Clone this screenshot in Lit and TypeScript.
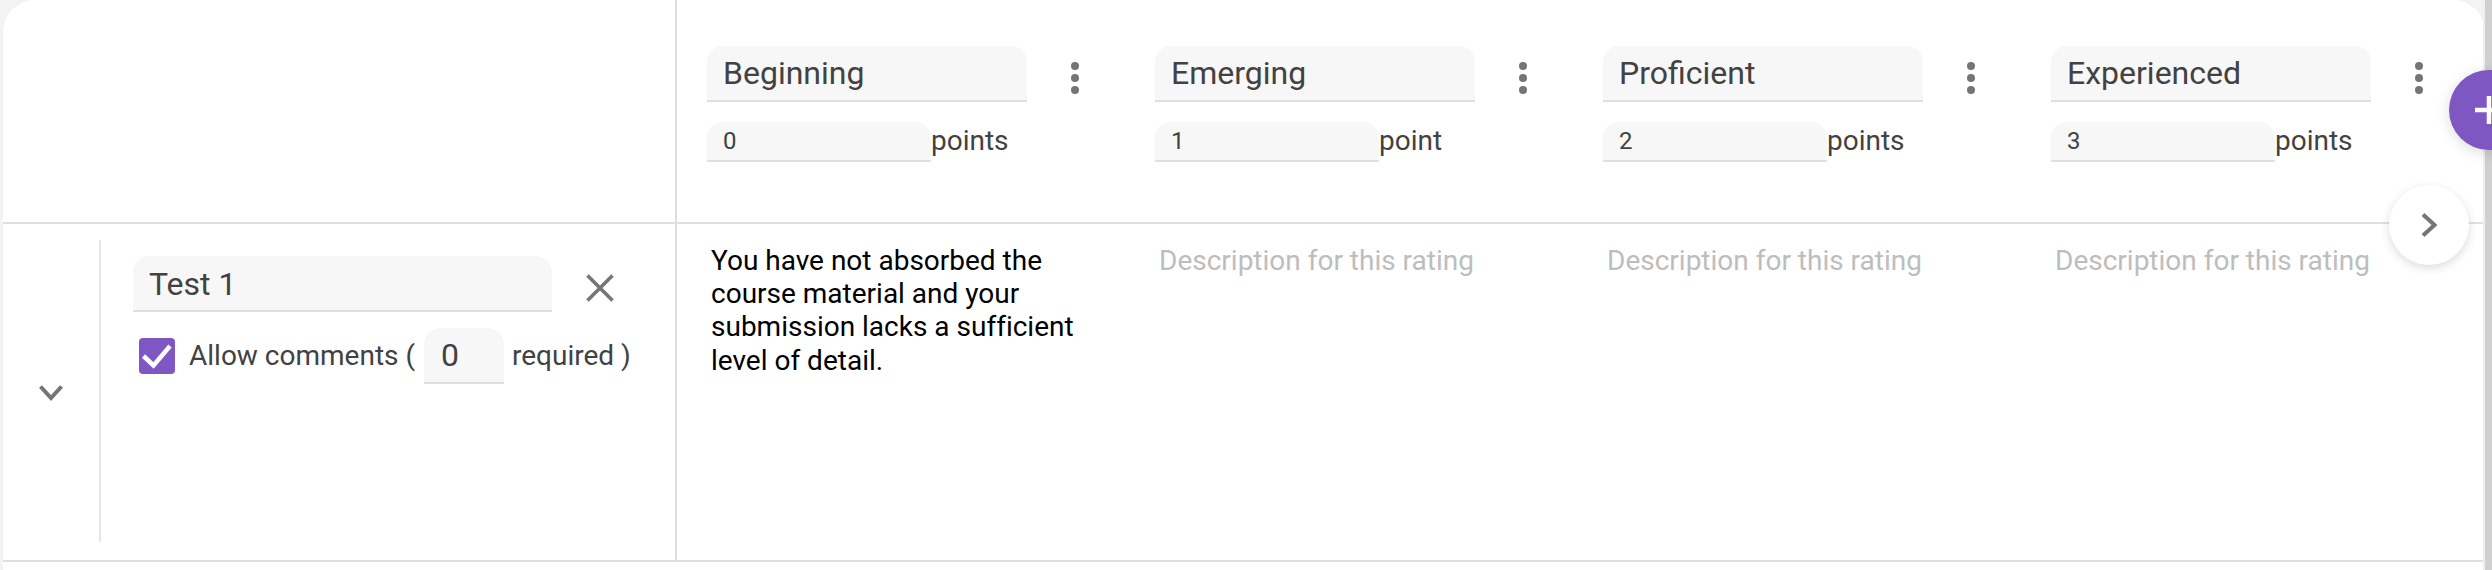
import { LitElement, html, css } from "lit";
import { customElement } from "lit/decorators.js";

const ratings = [
  { title: "Beginning", value: "0", unit: "points", desc: "You have not absorbed the course material and your submission lacks a sufficient level of detail.", filled: true },
  { title: "Emerging", value: "1", unit: "point", desc: "Description for this rating", filled: false },
  { title: "Proficient", value: "2", unit: "points", desc: "Description for this rating", filled: false },
  { title: "Experienced", value: "3", unit: "points", desc: "Description for this rating", filled: false },
];

@customElement("app-root")
export class AppRoot extends LitElement {
  static styles = css`
    :host {
      display: block;
      width: 2492px;
      height: 570px;
      overflow: hidden;
      position: relative;
      background: #f3f3f3;
      font-family: Roboto, "Liberation Sans", sans-serif;
      color: #424242;
    }
    .card {
      margin-left: 3px;
      width: 2482px;
      height: 570px;
      background: #fff;
      border-top-left-radius: 32px;
      border-top-right-radius: 32px;
      overflow: hidden;
    }
    .head {
      display: flex;
      height: 222px;
      border-bottom: 2px solid #e0e0e0;
    }
    .row {
      display: flex;
      height: 336px;
      border-bottom: 2px solid #e0e0e0;
    }
    .left {
      flex: none;
      width: 672px;
      border-right: 2px solid #e0e0e0;
    }
    .row .left {
      display: flex;
      padding-top: 16px;
      padding-bottom: 18px;
      height: 302px;
    }
    .chev {
      flex: none;
      width: 98px;
      border-right: 2px solid #e7e7e7;
      display: flex;
      justify-content: center;
      padding-top: 145px;
      padding-right: 1px;
      box-sizing: border-box;
    }
    .crit { padding: 16px 0 0 32px; }
    .crit-top { display: flex; align-items: center; }
    .field {
      background: #f7f7f7;
      border-bottom: 2px solid #e0e0e0;
      border-radius: 16px 16px 0 0;
      box-sizing: border-box;
    }
    .name {
      width: 419px;
      height: 56px;
      padding-left: 16px;
      font-size: 32px;
      line-height: 56px;
    }
    .x { margin-left: 34px; display: block; margin-top: 7px; }
    .comments {
      display: flex;
      align-items: center;
      margin-top: 16px;
      margin-left: 6px;
      font-size: 28px;
    }
    .comments span { margin-bottom: 2px; }
    .check {
      flex: none;
      width: 36px;
      height: 36px;
      border-radius: 4px;
      background: #7e57c2;
      display: block;
      margin-right: 14px;
    }
    .req {
      width: 80px;
      height: 56px;
      margin: 0 8px 0 9px;
      padding-left: 17px;
      font-size: 32px;
      line-height: 54px;
    }
    .cols { display: flex; padding-left: 30px; }
    .col { flex: none; width: 448px; box-sizing: border-box; }
    .head .col { padding-top: 46px; }
    .title-row { display: flex; align-items: flex-start; }
    .title {
      width: 320px;
      height: 56px;
      padding-left: 16px;
      font-size: 32px;
      line-height: 55px;
    }
    .dots { display: block; margin-left: 44px; margin-top: 16px; }
    .pts { display: flex; margin-top: 20px; align-items: flex-start; }
    .val {
      width: 224px;
      height: 40px;
      padding-left: 16px;
      font-size: 24px;
      line-height: 38px;
    }
    .unit { font-size: 28px; line-height: 38px; }
    .desc {
      width: 364px;
      padding: 20px 0 0 4px;
      font-size: 28px;
      line-height: 33.2px;
      color: #000;
      font-variant-ligatures: none;
    }
    .desc.empty { color: #bdbdbd; white-space: nowrap; }
    .scroll {
      position: absolute;
      left: 2483px;
      top: 0;
      width: 9px;
      height: 570px;
      box-sizing: border-box;
      border-left: 2px solid #efefef;
      background: #d0d0d0;
    }
    .fab {
      position: absolute;
      left: 2449px;
      top: 70px;
      width: 80px;
      height: 80px;
      border-radius: 50%;
      background: #7e57c2;
      box-shadow: 0 3px 14px rgba(0,0,0,.14);
      display: block;
    }
    .next {
      position: absolute;
      left: 2389px;
      top: 185px;
      width: 80px;
      height: 80px;
      border-radius: 50%;
      background: #fff;
      box-shadow: 0 3px 10px rgba(0,0,0,.14);
      display: flex;
      align-items: center;
      justify-content: center;
    }
  `;

  private dots() {
    return html`<svg class="dots" width="8" height="32" viewBox="0 0 8 32" fill="#757575">
      <circle cx="4" cy="4" r="4"></circle><circle cx="4" cy="16" r="4"></circle><circle cx="4" cy="28" r="4"></circle>
    </svg>`;
  }

  render() {
    return html`
      <div class="card">
        <div class="head">
          <div class="left"></div>
          <div class="cols">
            ${ratings.map(
              (r) => html`<div class="col">
                <div class="title-row"><div class="field title">${r.title}</div>${this.dots()}</div>
                <div class="pts"><div class="field val">${r.value}</div><div class="unit">${r.unit}</div></div>
              </div>`
            )}
          </div>
        </div>
        <div class="row">
          <div class="left">
            <div class="chev">
              <svg width="24" height="16" viewBox="0 0 24 16" fill="none" stroke="#757575" stroke-width="4"><path d="M1.5 1.5 L12 13 L22.5 1.5"></path></svg>
            </div>
            <div class="crit">
              <div class="crit-top">
                <div class="field name">Test 1</div>
                <svg class="x" width="28" height="28" viewBox="0 0 28 28" fill="none" stroke="#757575" stroke-width="3.6"><path d="M1.5 1.5 L26.5 26.5 M26.5 1.5 L1.5 26.5"></path></svg>
              </div>
              <div class="comments">
                <svg class="check" viewBox="0 0 36 36"><path d="M4.5 18 L14.5 27.5 L31 8" fill="none" stroke="#fff" stroke-width="4.5"></path></svg>
                <span>Allow comments (</span>
                <div class="field req">0</div>
                <span>required )</span>
              </div>
            </div>
          </div>
          <div class="cols">
            ${ratings.map(
              (r) => html`<div class="col"><div class="desc ${r.filled ? "" : "empty"}">${r.desc}</div></div>`
            )}
          </div>
        </div>
      </div>
      <div class="scroll"></div>
      <svg class="fab" viewBox="0 0 80 80" fill="none" stroke="#fff" stroke-width="4.5"><path d="M26 40 H54 M40 26 V54"></path></svg>
      <div class="next">
        <svg width="16" height="24" viewBox="0 0 16 24" fill="none" stroke="#757575" stroke-width="4"><path d="M2 1.5 L13.5 12 L2 22.5"></path></svg>
      </div>
    `;
  }
}
